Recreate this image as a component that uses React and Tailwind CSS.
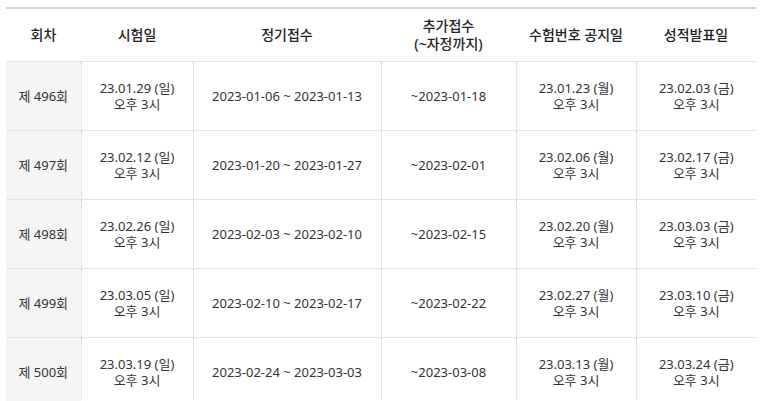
const rows = [
  ['제 496회', '23.01.29 (일)', '2023-01-06 ~ 2023-01-13', '~2023-01-18', '23.01.23 (월)', '23.02.03 (금)'],
  ['제 497회', '23.02.12 (일)', '2023-01-20 ~ 2023-01-27', '~2023-02-01', '23.02.06 (월)', '23.02.17 (금)'],
  ['제 498회', '23.02.26 (일)', '2023-02-03 ~ 2023-02-10', '~2023-02-15', '23.02.20 (월)', '23.03.03 (금)'],
  ['제 499회', '23.03.05 (일)', '2023-02-10 ~ 2023-02-17', '~2023-02-22', '23.02.27 (월)', '23.03.10 (금)'],
  ['제 500회', '23.03.19 (일)', '2023-02-24 ~ 2023-03-03', '~2023-03-08', '23.03.13 (월)', '23.03.24 (금)'],
];

const cell = 'border-l border-dotted border-l-[#cfcfcf] text-center align-middle';

export default function App() {
  return (
    <div className="bg-white w-[762px] h-[401px] overflow-hidden pt-[7px] px-[6px] font-['Noto_Sans','Noto_Sans_CJK_KR',sans-serif] text-[#333]">
      <table className="w-[750px] table-fixed border-collapse border-t-2 border-t-[#d4d4d4]">
        <colgroup>
          <col className="w-[75px]" />
          <col className="w-[112px]" />
          <col className="w-[188px]" />
          <col className="w-[135px]" />
          <col className="w-[120px]" />
          <col className="w-[120px]" />
        </colgroup>
        <thead>
          <tr className="h-[53px] border-b border-b-[#e3e3e3] text-[14px] leading-[18px] text-[#222]">
            <th className="text-center font-medium">회차</th>
            <th className="text-center font-medium">시험일</th>
            <th className="text-center font-medium">정기접수</th>
            <th className="text-center font-medium">추가접수<br />(~자정까지)</th>
            <th className="text-center font-medium">수험번호 공지일</th>
            <th className="text-center font-medium">성적발표일</th>
          </tr>
        </thead>
        <tbody className="text-[13px] leading-[16px]">
          {rows.map((r) => (
            <tr key={r[0]} className="h-[69px] border-b border-b-[#e3e3e3]">
              <td className="bg-[#f5f5f5] text-center">{r[0]}</td>
              <td className={cell}>{r[1]}<br />오후 3시</td>
              <td className={cell}>{r[2]}</td>
              <td className={cell}>{r[3]}</td>
              <td className={cell}>{r[4]}<br />오후 3시</td>
              <td className={cell}>{r[5]}<br />오후 3시</td>
            </tr>
          ))}
        </tbody>
      </table>
    </div>
  );
}
